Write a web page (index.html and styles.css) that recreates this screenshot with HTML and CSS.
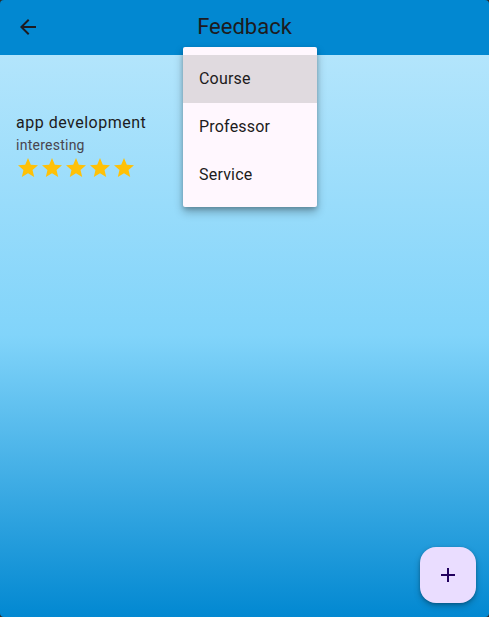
FILE: index.html
```html
<!DOCTYPE html>
<html>
<head>
<meta charset="utf-8">
<link rel="stylesheet" href="styles.css">
</head>
<body>
<div class="app">
  <header class="appbar">
    <button class="back" aria-label="Back">
      <svg viewBox="0 0 24 24" width="24" height="24"><path d="M20 11H7.83l5.59-5.59L12 4l-8 8 8 8 1.41-1.41L7.83 13H20v-2z"/></svg>
    </button>
    <h1 class="title">Feedback</h1>
  </header>
  <main class="body">
    <div class="item">
      <div class="item-title">app development</div>
      <div class="item-sub">interesting</div>
      <div class="stars">
        <svg viewBox="0 0 24 24" width="24" height="24"><path d="M12 17.27L18.18 21l-1.64-7.03L22 9.24l-7.19-.61L12 2 9.19 8.63 2 9.24l5.46 4.73L5.82 21z"/></svg>
        <svg viewBox="0 0 24 24" width="24" height="24"><path d="M12 17.27L18.18 21l-1.64-7.03L22 9.24l-7.19-.61L12 2 9.19 8.63 2 9.24l5.46 4.73L5.82 21z"/></svg>
        <svg viewBox="0 0 24 24" width="24" height="24"><path d="M12 17.27L18.18 21l-1.64-7.03L22 9.24l-7.19-.61L12 2 9.19 8.63 2 9.24l5.46 4.73L5.82 21z"/></svg>
        <svg viewBox="0 0 24 24" width="24" height="24"><path d="M12 17.27L18.18 21l-1.64-7.03L22 9.24l-7.19-.61L12 2 9.19 8.63 2 9.24l5.46 4.73L5.82 21z"/></svg>
        <svg viewBox="0 0 24 24" width="24" height="24"><path d="M12 17.27L18.18 21l-1.64-7.03L22 9.24l-7.19-.61L12 2 9.19 8.63 2 9.24l5.46 4.73L5.82 21z"/></svg>
      </div>
    </div>
  </main>
  <ul class="menu">
    <li class="menu-item selected">Course</li>
    <li class="menu-item">Professor</li>
    <li class="menu-item">Service</li>
  </ul>
  <button class="fab" aria-label="Add">
    <svg viewBox="0 0 24 24" width="24" height="24"><path d="M19 13h-6v6h-2v-6H5v-2h6V5h2v6h6v2z"/></svg>
  </button>
</div>
</body>
</html>
```
FILE: styles.css
```css
html, body {
  margin: 0;
  padding: 0;
  background: #2b2b2b;
  width: 489px;
  height: 617px;
  overflow: hidden;
}
.app {
  position: relative;
  width: 489px;
  height: 617px;
  border-radius: 4px;
  overflow: hidden;
  display: flex;
  flex-direction: column;
  font-family: Roboto, "Liberation Sans", sans-serif;
}
.appbar {
  height: 55px;
  flex: none;
  background: #0288d1;
  display: flex;
  align-items: center;
  position: relative;
}
.back {
  border: none;
  background: none;
  padding: 0;
  margin-left: 16px;
  margin-top: -2px;
  width: 24px;
  height: 24px;
  display: flex;
  fill: #1d1b20;
}
.title {
  position: absolute;
  left: 0;
  right: 0;
  top: 0;
  height: 53px;
  margin: 0;
  display: flex;
  align-items: center;
  justify-content: center;
  font-weight: 400;
  font-size: 22px;
  color: #1d1b20;
  pointer-events: none;
}
.body {
  flex: 1;
  background: linear-gradient(to bottom, #b3e5fc 0%, #81d4fa 50%, #0288d1 100%);
  padding: 56px 16px 0;
}
.item-title {
  font-size: 16px;
  line-height: 24px;
  color: #1d1b20;
  letter-spacing: 0.5px;
}
.item-sub {
  font-size: 14px;
  line-height: 20px;
  color: #49454f;
  letter-spacing: 0.25px;
}
.stars {
  display: flex;
  margin-top: 1px;
  fill: #ffc107;
}
.menu {
  position: absolute;
  left: 183px;
  top: 47px;
  width: 134px;
  margin: 0;
  padding: 8px 0;
  list-style: none;
  background: #fff7fe;
  border-radius: 2px;
  box-shadow: 0 5px 10px rgba(0,0,0,0.28), 0 2px 4px rgba(0,0,0,0.18);
}
.menu-item {
  height: 48px;
  box-sizing: border-box;
  padding: 0 16px 2px;
  display: flex;
  align-items: center;
  font-size: 16px;
  color: #1d1b20;
  letter-spacing: 0.2px;
}
.menu-item.selected {
  background: #e0dadf;
}
.fab {
  position: absolute;
  left: 420px;
  top: 547px;
  width: 56px;
  height: 56px;
  border: none;
  border-radius: 16px;
  background: #eaddff;
  display: flex;
  align-items: center;
  justify-content: center;
  padding: 0;
  fill: #21005d;
  box-shadow: 0 3px 6px rgba(0,0,0,0.25), 0 1px 3px rgba(0,0,0,0.2);
}
```
